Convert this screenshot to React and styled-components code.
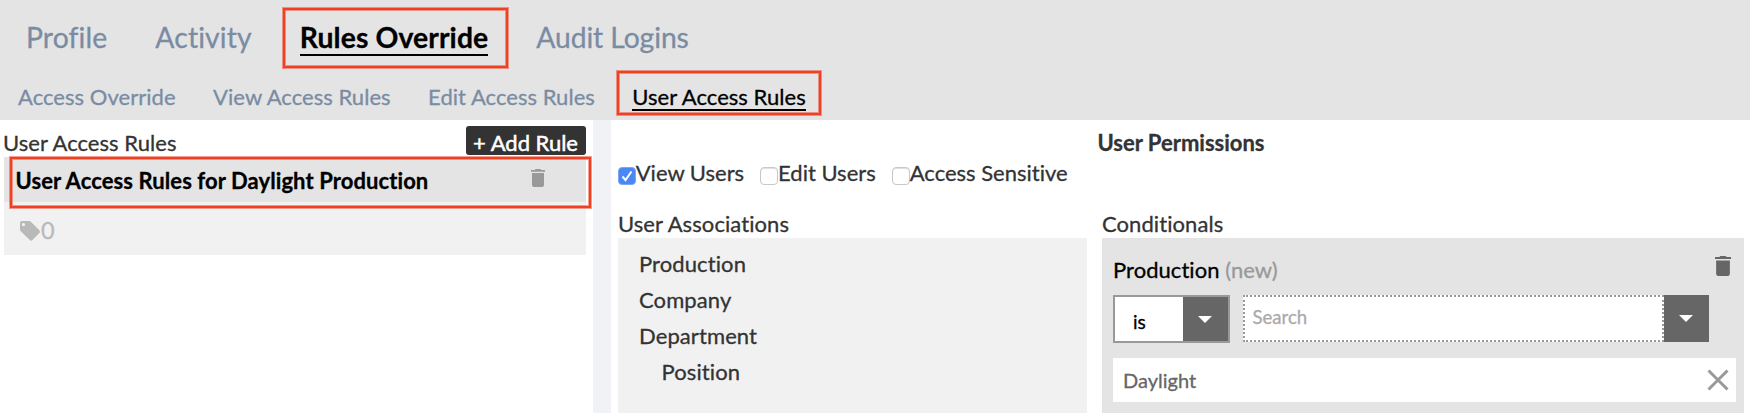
import React from "react";
import styled, { createGlobalStyle, css } from "styled-components";

const GlobalStyle = createGlobalStyle`
  * { box-sizing: border-box; }
  body {
    margin: 0;
    background: #fff;
    color: #333;
    font-family: Lato, "Liberation Sans", sans-serif;
    font-size: 22px;
    line-height: 26px;
    font-variant-ligatures: none;
    -webkit-text-stroke: 0.3px currentColor;
    overflow: hidden;
  }
`;

const Page = styled.div`
  display: flex;
  flex-direction: column;
  height: 413px;
  overflow: hidden;
`;

const Header = styled.header`
  height: 120px;
  flex: none;
  background: #e4e4e4;
`;

const callout = css`
  &::after {
    content: "";
    position: absolute;
    inset: ${(p) => p.$callout};
    border: 2px solid #ee4023;
    box-shadow: 0 0 0 1px rgba(238, 64, 35, 0.5), inset 0 0 0 1px rgba(238, 64, 35, 0.5);
    pointer-events: none;
    z-index: 1;
  }
`;

const MainTabs = styled.nav`
  display: flex;
  gap: 48px;
  height: 74px;
  padding: 20px 0 0 26px;
`;

const SubTabs = styled.nav`
  display: flex;
  gap: 37.5px;
  padding: 10px 0 0 18px;
`;

const Tab = styled.a`
  position: relative;
  height: 36px;
  font-size: 28.3px;
  line-height: 34px;
  letter-spacing: ${(p) => p.$tracking ?? 0.12}px;
  white-space: nowrap;
  color: ${(p) => (p.$active ? "#000" : "#7a8ca3")};
  font-weight: ${(p) => (p.$active ? 700 : 400)};
  border-bottom: 2px solid ${(p) => (p.$active ? "#000" : "transparent")};
  ${(p) => p.$callout && callout}
`;

const SubTab = styled(Tab)`
  height: 27px;
  font-size: 22px;
  line-height: 25px;
  letter-spacing: 0.04px;
  font-weight: 400;
`;

const Body = styled.main`
  display: flex;
  flex: 1;
  min-height: 0;
`;

const Sidebar = styled.aside`
  width: 593px;
  padding: 6px 7px 0 4px;
`;

const SidebarHead = styled.div`
  display: flex;
  justify-content: space-between;
  height: 31px;
`;

const SidebarTitle = styled.div`
  padding-top: 3px;
  margin-left: -1px;
  line-height: 27px;
  letter-spacing: 0.05px;
`;

const AddButton = styled.button`
  width: 120px;
  height: 29px;
  padding: 4px 1px 0 0;
  border: 0;
  border-radius: 3px;
  background: #333;
  color: #fff;
  font: 400 22px/25px Lato, sans-serif;
  -webkit-text-stroke: 0.5px currentColor;
  white-space: nowrap;
`;

const RuleHead = styled.div`
  position: relative;
  display: flex;
  justify-content: space-between;
  height: 45px;
  width: 582px;
  padding: 11px 41px 0 11.5px;
  background: #e4e4e4;
  color: #000;
  font-weight: 700;
  letter-spacing: 0.09px;
  ${callout}
`;

const RuleMeta = styled.div`
  display: flex;
  width: 582px;
  height: 53px;
  padding: 15px 0 0 15px;
  background: #f1f1f1;
  color: #b9b9b9;
  font-size: 23.5px;
  line-height: 27px;
`;

const Divider = styled.div`
  width: 18px;
  background: #f1f2f5;
`;

const Content = styled.section`
  flex: 1;
  padding: 0 6px 0 7px;
`;

const ContentTitle = styled.h2`
  margin: 0;
  padding: 10px 0 0 0;
  height: 37px;
  font-size: 22px;
  line-height: 25px;
  text-align: center;
`;

const Checks = styled.div`
  display: flex;
  gap: 16.3px;
  height: 65px;
  padding-top: 3px;
`;

const Check = styled.label`
  display: flex;
  line-height: 25px;
  white-space: nowrap;
`;

const Box = styled.span`
  display: flex;
  width: 18px;
  height: 18px;
  margin: 7px -0.3px 0 0;
  border-radius: 4px;
  border: 1px solid ${(p) => (p.$checked ? "#7ba8f6" : "#c9c9c9")};
  background: ${(p) => (p.$checked ? "#4a86f4" : "#fff")};
  box-shadow: ${(p) => (p.$checked ? "none" : "inset 0 1px 1px #ddd")};
`;

const Columns = styled.div`
  display: grid;
  grid-template-columns: 469px 642px;
  column-gap: 15px;
`;

const ColumnTitle = styled.div`
  height: 27px;
  line-height: 25px;
  margin-top: -11px;
  letter-spacing: 0.08px;
`;

const Associations = styled.ul`
  margin: 0;
  padding: 8px 0 0 21px;
  height: 175px;
  list-style: none;
  background: #f1f1f1;
`;

const Association = styled.li`
  height: 36px;
  line-height: 35px;
  letter-spacing: 0.1px;
  padding-left: ${(p) => (p.$nested ? 22.5 : 0)}px;
`;

const Conditional = styled.div`
  height: 175px;
  padding: 18px 8px 0 11px;
  background: #e4e4e4;
`;

const ConditionalHead = styled.div`
  display: flex;
  justify-content: space-between;
  height: 39px;
  padding-right: 5px;
  color: #000;
  line-height: 27px;
  letter-spacing: 0.05px;
`;

const Muted = styled.span`
  color: #999;
`;

const Controls = styled.div`
  display: flex;
  gap: 13px;
  height: 63px;
`;

const Operator = styled.div`
  display: flex;
  width: 117px;
  height: 48px;
  border: 2px solid #999;
  background: #fff;
  color: #000;
  font-size: 19px;
`;

const OperatorValue = styled.div`
  flex: 1;
  padding: 12px 0 0 18px;
`;

const Search = styled.div`
  display: flex;
  width: 466px;
  height: 47px;
`;

const SearchField = styled.div`
  flex: 1;
  padding: 7px 0 0 7.5px;
  border: 2px dotted #999;
  background: #fff;
  color: #aaa;
  font-size: 18.6px;
  line-height: 26px;
`;

const Caret = styled.div`
  display: flex;
  justify-content: center;
  width: 45px;
  padding: ${(p) => p.$top}px 1px 0 0;
  background: #666;
`;

const Value = styled.div`
  display: flex;
  justify-content: space-between;
  width: 623px;
  height: 44px;
  padding: 9px 7px 0 10px;
  background: #fff;
  color: #666;
  font-size: 20px;
  line-height: 26px;
`;

const Icon = styled.svg`
  display: block;
  flex: none;
  margin-top: ${(p) => p.$top || 0}px;
`;

const Trash = ({ width, height, top, color }) => (
  <Icon width={width} height={height} $top={top} viewBox="0 0 14 18" preserveAspectRatio="none" fill={color}>
    <path d="M0 1h3.8l.9-1h4.6l.9 1H14v1.8H0zM1 4h12v12q0 2-2 2H3q-2 0-2-2z" />
  </Icon>
);

const CaretIcon = () => (
  <Icon width="14" height="7" viewBox="0 0 14 7" fill="#fff">
    <path d="M0 0h14L7 7z" />
  </Icon>
);

const CheckField = ({ checked, children }) => (
  <Check>
    <Box $checked={checked}>
      {checked && (
        <Icon width="16" height="16" viewBox="0 0 16 16" fill="none" stroke="#fff" strokeWidth="2">
          <path d="M3.5 8.5 6.5 12 12.5 3.5" />
        </Icon>
      )}
    </Box>
    {children}
  </Check>
);

export default function App() {
  return (
    <Page>
      <GlobalStyle />
      <Header>
        <MainTabs>
          <Tab>Profile</Tab>
          <Tab>Activity</Tab>
          <Tab $active $callout="-12px -20px -14px -17px">Rules Override</Tab>
          <Tab $tracking={-0.1}>Audit Logins</Tab>
        </MainTabs>
        <SubTabs>
          <SubTab>Access Override</SubTab>
          <SubTab>View Access Rules</SubTab>
          <SubTab>Edit Access Rules</SubTab>
          <SubTab $active $callout="-13px -15px -6px -15px">User Access Rules</SubTab>
        </SubTabs>
      </Header>
      <Body>
        <Sidebar>
          <SidebarHead>
            <SidebarTitle>User Access Rules</SidebarTitle>
            <AddButton>+ Add Rule</AddButton>
          </SidebarHead>
          <RuleHead $callout="0 -5px -6px 6px">
            User Access Rules for Daylight Production
            <Trash width="14" height="18" top={1} color="#999" />
          </RuleHead>
          <RuleMeta>
            <Icon width="22" height="22" $top={3} viewBox="0 0 22 22" fill="#b9b9b9">
              <path
                fillRule="evenodd"
                d="M3 1h7q1 0 2 .9l8.4 8.4q1.3 1.4 0 2.7l-6.9 7q-1.4 1.3-2.7 0L2 11.6Q1 10.7 1 9.5V3Q1 1 3 1zm1.5 2a1.6 1.6 0 1 0 .01 0z"
              />
            </Icon>
            0
          </RuleMeta>
        </Sidebar>
        <Divider />
        <Content>
          <ContentTitle>User Permissions</ContentTitle>
          <Checks>
            <CheckField checked>View Users</CheckField>
            <CheckField>Edit Users</CheckField>
            <CheckField>Access Sensitive</CheckField>
          </Checks>
          <Columns>
            <div>
              <ColumnTitle>User Associations</ColumnTitle>
              <Associations>
                <Association>Production</Association>
                <Association>Company</Association>
                <Association>Department</Association>
                <Association $nested>Position</Association>
              </Associations>
            </div>
            <div>
              <ColumnTitle>Conditionals</ColumnTitle>
              <Conditional>
                <ConditionalHead>
                  <span>
                    Production <Muted>(new)</Muted>
                  </span>
                  <Trash width="16" height="20" color="#666" />
                </ConditionalHead>
                <Controls>
                  <Operator>
                    <OperatorValue>is</OperatorValue>
                    <Caret $top={19}>
                      <CaretIcon />
                    </Caret>
                  </Operator>
                  <Search>
                    <SearchField>Search</SearchField>
                    <Caret $top={20}>
                      <CaretIcon />
                    </Caret>
                  </Search>
                </Controls>
                <Value>
                  Daylight
                  <Icon width="22" height="22" $top={2} viewBox="0 0 22 22" stroke="#999" strokeWidth="3">
                    <path d="M1.5 1.5l19 19M20.5 1.5l-19 19" />
                  </Icon>
                </Value>
              </Conditional>
            </div>
          </Columns>
        </Content>
      </Body>
    </Page>
  );
}
